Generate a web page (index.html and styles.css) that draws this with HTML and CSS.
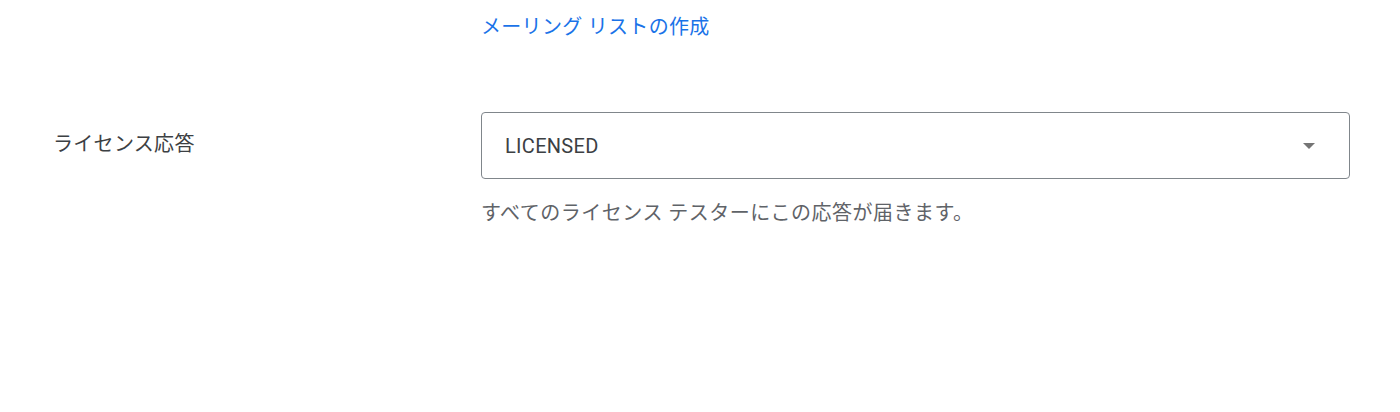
FILE: index.html
```html
<!DOCTYPE html>
<html lang="ja">
<head>
<meta charset="utf-8">
<title>ライセンス応答</title>
<link rel="stylesheet" href="styles.css">
</head>
<body>
<div class="page">
  <div class="row row-link">
    <div class="label-col"></div>
    <div class="control-col">
      <a class="link" href="#">メーリング リストの作成</a>
    </div>
  </div>
  <div class="row row-field">
    <div class="label-col">
      <div class="label">ライセンス応答</div>
    </div>
    <div class="control-col">
      <div class="select">
        <span class="select-value">LICENSED</span>
        <span class="select-arrow"></span>
      </div>
      <div class="helper">すべてのライセンス テスターにこの応答が届きます。</div>
    </div>
  </div>
</div>
</body>
</html>
```

FILE: styles.css
```css
html, body {
  margin: 0;
  padding: 0;
  background: #ffffff;
}

body {
  font-family: Roboto, "Noto Sans CJK JP", "Noto Sans", sans-serif;
  font-size: 20px;
  line-height: 24px;
  color: #3c4043;
  letter-spacing: 0.3px;
}

.page {
  padding: 15px 50px 0 54px;
}

.row {
  display: grid;
  grid-template-columns: 427px 1fr;
}

.row-link {
  margin-bottom: 73px;
}

.link {
  color: #1a73e8;
  text-decoration: none;
  display: inline-block;
}

.label {
  margin-top: 20px;
  margin-left: -1px;
  color: #3c4043;
}

.select {
  height: 65px;
  border: 1px solid #80868b;
  border-radius: 4px;
  display: flex;
  align-items: center;
  justify-content: space-between;
  padding: 0 34px 0 23px;
}

.select-value {
  color: #3c4043;
  padding-top: 1px;
}

.select-arrow {
  width: 0;
  height: 0;
  border-left: 6px solid transparent;
  border-right: 6px solid transparent;
  border-top: 6px solid #757575;
  margin-top: 1px;
}

.helper {
  margin-top: 22px;
  color: #5f6368;
  letter-spacing: 0.5px;
}
```
